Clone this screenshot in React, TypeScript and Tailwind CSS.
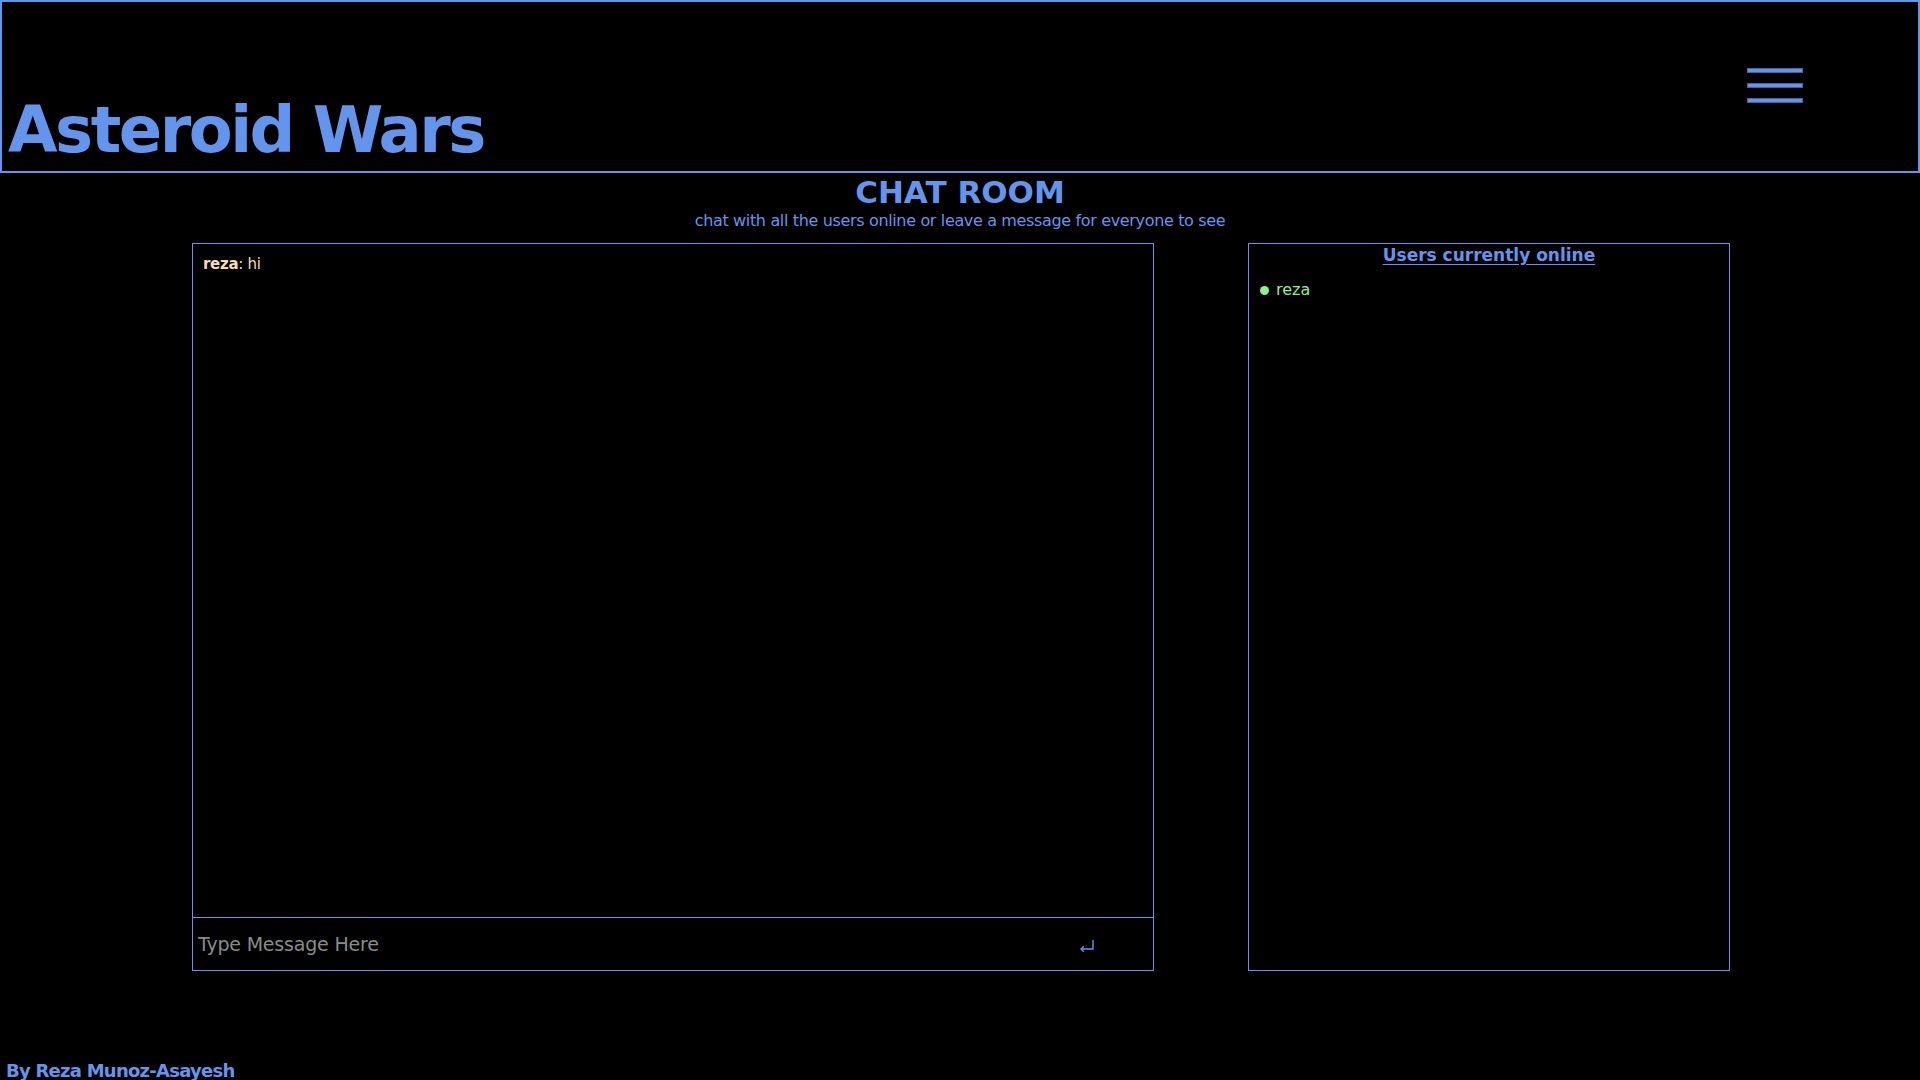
import React, { useState } from 'react';

const users = ['reza'];

export default function App() {
  const [messages] = useState([{ user: 'reza', text: 'hi' }]);
  const [input, setInput] = useState('');

  return (
    <div className="h-screen w-full overflow-hidden bg-black text-[#6495ED] font-['DejaVu_Sans',sans-serif]">
      {/* Header */}
      <header className="flex h-[173px] items-end justify-between border-2 border-[#6495ED]">
        <h1 className="pb-[9px] pl-[6px] text-[64px] font-bold leading-none tracking-[-2.5px]">
          Asteroid Wars
        </h1>
        <button className="mb-[68px] mr-[115px] flex flex-col gap-[10px]">
          <span className="block h-[5px] w-[56px] border border-[#41649f] bg-[#6495ED]" />
          <span className="block h-[5px] w-[56px] border border-[#41649f] bg-[#6495ED]" />
          <span className="block h-[5px] w-[56px] border border-[#41649f] bg-[#6495ED]" />
        </button>
      </header>

      {/* Title */}
      <div className="flex flex-col items-center pt-[2px]">
        <h2 className="text-[31px] font-bold leading-[34px]">CHAT ROOM</h2>
        <p className="mt-[2px] text-[16px] leading-[20px] tracking-[-0.35px]">
          chat with all the users online or leave a message for everyone to see
        </p>
      </div>

      {/* Panels */}
      <div className="mt-[12px] flex gap-[94px] pl-[192px]">
        <div className="flex h-[728px] w-[962px] flex-col border border-[#6495ED]">
          <div className="flex-1 overflow-y-auto px-[10px] pt-[11px]">
            {messages.map((m, i) => (
              <div key={i} className="text-[15px] leading-[18px] text-[#F5DEB3] tracking-[-0.3px]">
                <span className="font-bold">{m.user}</span>: {m.text}
              </div>
            ))}
          </div>
          <div className="flex h-[53px] items-center border-t border-[#6495ED]">
            <input
              type="text"
              placeholder="Type Message Here"
              value={input}
              onChange={(e) => setInput(e.target.value)}
              className="flex-1 bg-transparent pl-[5px] text-[19px] tracking-[-0.2px] text-white placeholder-[#8a8a8a] outline-none"
            />
            <span className="mr-[58px] mt-[2px]">
              <svg width="16" height="13" viewBox="0 0 16 13" fill="none" stroke="#6495ED" strokeWidth="1.4">
                <path d="M14 1 V10 H2" />
                <path d="M4.8 7.2 L2 10 L4.8 12.8" />
              </svg>
            </span>
          </div>
        </div>

        <div className="h-[728px] w-[482px] border border-[#6495ED]">
          <div className="text-center">
            <span className="text-[17px] font-bold leading-[22px] underline underline-offset-[3px]">
              Users currently online
            </span>
          </div>
          <ul className="mt-[12px] pl-[11px]">
            {users.map((u) => (
              <li key={u} className="flex items-center gap-[7px] text-[16px] leading-[20px] text-[#90EE90]">
                <span className="h-[9px] w-[9px] rounded-full bg-[#90EE90]" />
                {u}
              </li>
            ))}
          </ul>
        </div>
      </div>

      {/* Footer */}
      <footer className="mt-[89px] pl-[6px] text-[18px] font-bold leading-[22px] tracking-[-0.75px]">
        By Reza Munoz-Asayesh
      </footer>
    </div>
  );
}
